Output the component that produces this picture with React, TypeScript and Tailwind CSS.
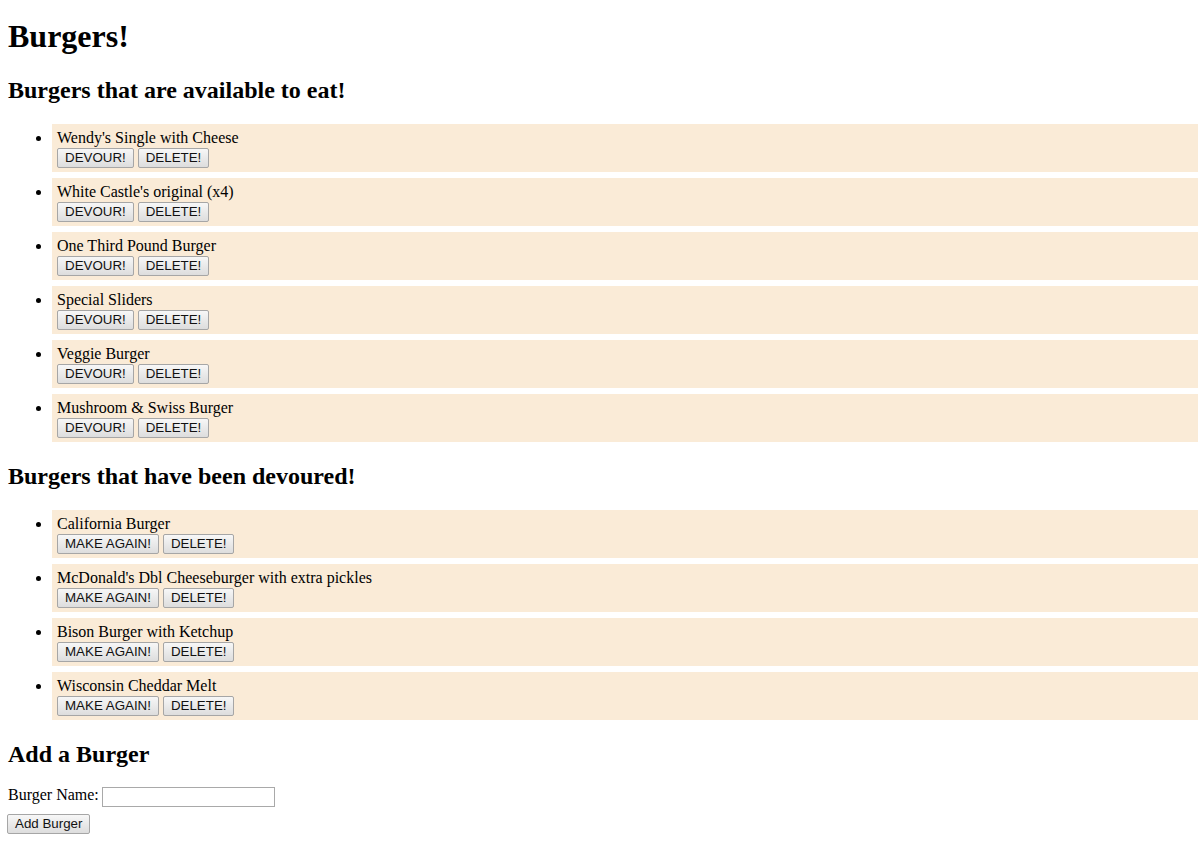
const available = [
  "Wendy's Single with Cheese",
  "White Castle's original (x4)",
  "One Third Pound Burger",
  "Special Sliders",
  "Veggie Burger",
  "Mushroom & Swiss Burger",
]

const devoured = [
  "California Burger",
  "McDonald's Dbl Cheeseburger with extra pickles",
  "Bison Burger with Ketchup",
  "Wisconsin Cheddar Melt",
]

function Btn({ children }: { children: React.ReactNode }) {
  return (
    <button className="h-[20px] px-[7px] border border-[#a6a6a6] rounded-[2px] bg-gradient-to-b from-[#f7f7f7] to-[#dddddd] font-['Liberation_Sans',Arial,sans-serif] text-[13.33px] leading-[18px] text-[#111]">
      {children}
    </button>
  )
}

function BurgerList({ items, action }: { items: string[]; action: string }) {
  return (
    <ul className="mt-[20px] pl-[40px] list-disc">
      {items.map((name) => (
        <li key={name} className="ml-[4px] mb-[6px] last:mb-0 pt-[4px] pb-[5px] px-[5px] bg-[#faebd7] leading-[19px]">
          <div className="h-[19px]">{name}</div>
          <div className="flex gap-[4px] h-[20px] pt-[1px]">
            <Btn>{action}</Btn>
            <Btn>DELETE!</Btn>
          </div>
        </li>
      ))}
    </ul>
  )
}

export default function App() {
  return (
    <div className="min-h-screen bg-white pl-[8px] pb-[20px] font-['Liberation_Serif','Times_New_Roman',serif] text-[16px] text-black">
      <h1 className="pt-[18px] text-[32px] font-bold leading-[37px]">Burgers!</h1>

      <h2 className="mt-[21px] text-[24px] font-bold leading-[28px]">Burgers that are available to eat!</h2>
      <BurgerList items={available} action="DEVOUR!" />

      <h2 className="mt-[20px] text-[24px] font-bold leading-[28px]">Burgers that have been devoured!</h2>
      <BurgerList items={devoured} action="MAKE AGAIN!" />

      <h2 className="mt-[20px] text-[24px] font-bold leading-[28px]">Add a Burger</h2>
      <form className="mt-[19px]" onSubmit={(e) => e.preventDefault()}>
        <div className="flex items-start gap-[3px] h-[20px]">
          <label className="leading-[18px] -mt-[1px]">Burger Name:</label>
          <input type="text" className="w-[173px] h-[20px] border border-[#a9a9a9] bg-white outline-none px-[2px]" />
        </div>
        <div className="mt-[7px] -ml-[1px] flex">
          <Btn>Add Burger</Btn>
        </div>
      </form>
    </div>
  )
}
